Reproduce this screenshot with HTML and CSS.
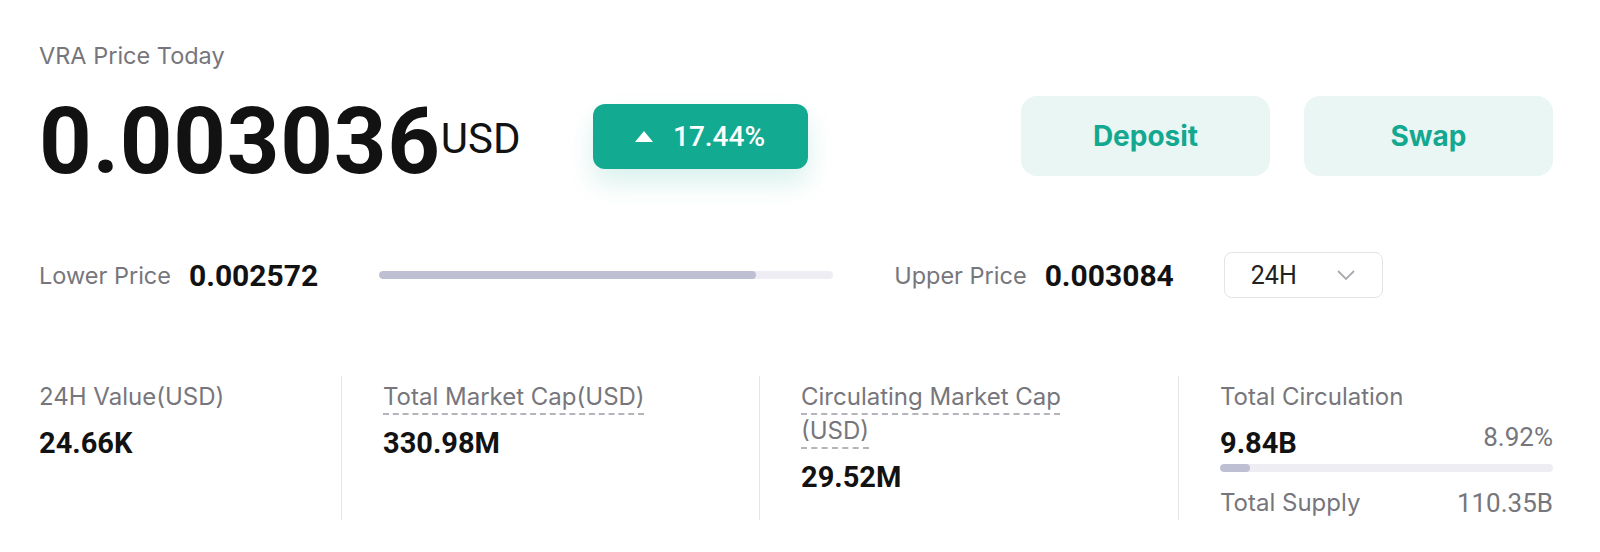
FILE: index.html
```html
<!DOCTYPE html>
<html lang="en">
<head>
  <meta charset="UTF-8">
  <meta name="viewport" content="width=device-width, initial-scale=1.0">
  <title>VRA Price Today</title>
  <link rel="stylesheet" href="styles.css">
</head>
<body>

<div class="ticker">
  <div class="title">VRA Price Today</div>

  <div class="price-row">
    <div class="price">
      <span class="price-num">0.003036</span>
      <span class="price-unit">USD</span>
    </div>
    <div class="change"><span class="arrow"></span>17.44%</div>
    <div class="actions">
      <button class="action">Deposit</button>
      <button class="action">Swap</button>
    </div>
  </div>

  <div class="range">
    <span class="label">Lower Price</span>
    <span class="num">0.002572</span>
    <div class="bar range-bar"><div class="fill" style="width: 83%"></div></div>
    <span class="label">Upper Price</span>
    <span class="num">0.003084</span>
    <div class="select">
      <span>24H</span>
      <svg width="20" height="12" viewBox="0 0 20 12"><path d="M2 2l8 8 8-8" fill="none" stroke="#a9a9b0" stroke-width="1.8"/></svg>
    </div>
  </div>

  <div class="stats">
    <div class="stat">
      <div class="label">24H Value(USD)</div>
      <div class="value">24.66K</div>
    </div>
    <div class="stat">
      <div class="label"><span class="dashed">Total Market Cap(USD)</span></div>
      <div class="value">330.98M</div>
    </div>
    <div class="stat">
      <div class="label"><span class="dashed">Circulating Market Cap (USD)</span></div>
      <div class="value">29.52M</div>
    </div>
    <div class="stat">
      <div class="label">Total Circulation</div>
      <div class="split">
        <span class="value">9.84B</span>
        <span class="muted">8.92%</span>
      </div>
      <div class="bar supply-bar"><div class="fill" style="width: 8.92%"></div></div>
      <div class="split">
        <span class="label">Total Supply</span>
        <span class="muted">110.35B</span>
      </div>
    </div>
  </div>
</div>

</body>
</html>
```

FILE: styles.css
```css
body {
  margin: 0;
  background-color: #fff;
  font-family: Inter, "Noto Sans", sans-serif;
  color: #121212;
}
.ticker {
  padding: 40px 47px 0 39px;
}
.title {
  font-size: 23.5px;
  line-height: 32px;
  color: #76767c;
}
.price-row {
  display: flex;
  align-items: center;
  height: 80px;
  margin-top: 24px;
}
.price {
  display: flex;
  align-items: flex-start;
  margin-top: 11px;
}
.price-num {
  font-family: Roboto, sans-serif;
  font-weight: 700;
  font-size: 92px;
  line-height: 1;
  letter-spacing: 0.7px;
}
.price-unit {
  font-family: Roboto, sans-serif;
  font-size: 42px;
  line-height: 1;
  margin-top: 22px;
}
.change {
  display: flex;
  align-items: center;
  justify-content: center;
  gap: 20px;
  width: 215px;
  height: 65px;
  margin-left: 72px;
  border-radius: 12px;
  background-color: #13aa92;
  box-shadow: 0 14px 26px rgba(19, 170, 146, 0.16);
  color: #fff;
  font-family: Roboto, sans-serif;
  font-weight: 500;
  font-size: 28px;
}
.arrow {
  width: 0;
  height: 0;
  border-left: 9px solid transparent;
  border-right: 9px solid transparent;
  border-bottom: 11px solid #fff;
}
.actions {
  display: flex;
  gap: 34px;
  margin-left: auto;
}
.action {
  width: 249px;
  height: 80px;
  border: none;
  border-radius: 16px;
  background-color: #eaf6f4;
  color: #13a88f;
  font-family: Inter, sans-serif;
  font-weight: 700;
  font-size: 28px;
  cursor: pointer;
}
.range {
  display: flex;
  align-items: center;
  margin-top: 76px;
  height: 46px;
}
.label {
  font-size: 23.5px;
  color: #76767c;
}
.num {
  font-family: Roboto, sans-serif;
  font-weight: 700;
  font-size: 30px;
  margin-left: 18px;
}
.bar {
  height: 8px;
  border-radius: 4px;
  background-color: #ededf3;
  overflow: hidden;
}
.bar .fill {
  height: 100%;
  border-radius: 4px;
  background-color: #bfbfd4;
}
.range-bar {
  width: 454px;
  margin: 0 61px 0 61px;
}
.select {
  display: flex;
  align-items: center;
  justify-content: space-between;
  box-sizing: border-box;
  width: 159px;
  height: 46px;
  margin-left: 50px;
  padding: 0 26px;
  border: 1.5px solid #e3e3e8;
  border-radius: 8px;
  font-family: Roboto, sans-serif;
  font-size: 25px;
  color: #222;
}
.stats {
  display: grid;
  grid-template-columns: 302px 418px 419px 1fr;
  margin-top: 78px;
}
.stat {
  height: 140px;
  padding: 4px 0 0 41px;
  border-left: 1.5px solid #e6e6ea;
}
.stat:first-child {
  padding-left: 0;
  border-left: none;
}
.stat .label {
  max-width: 300px;
  font-size: 24px;
  line-height: 34px;
}
.dashed {
  text-decoration: underline dashed #b4b4ba;
  text-decoration-thickness: 1.5px;
  text-underline-offset: 8px;
}
.value {
  font-family: Roboto, sans-serif;
  font-weight: 700;
  font-size: 29px;
  line-height: 34px;
  margin-top: 12px;
}
.split {
  display: flex;
  justify-content: space-between;
  align-items: center;
}
.muted {
  font-family: Roboto, sans-serif;
  font-size: 26px;
  color: #76767c;
}
.supply-bar {
  margin-top: 4px;
}
.supply-bar + .split {
  margin-top: 14px;
}
```
